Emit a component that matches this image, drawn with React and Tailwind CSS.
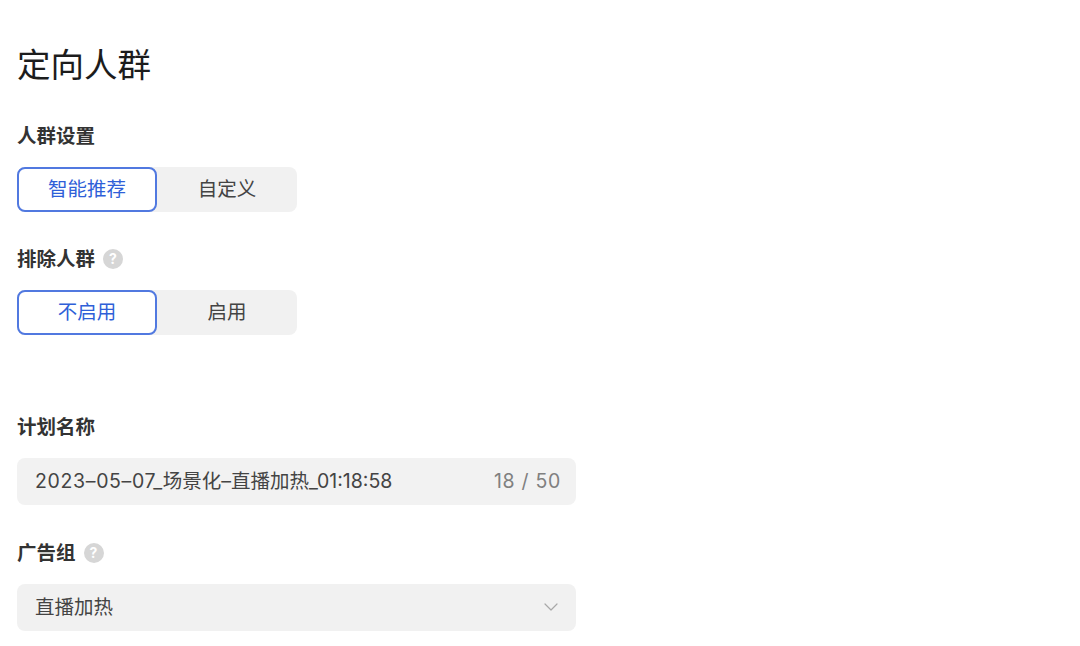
import React from 'react';
import { ChevronDown } from 'lucide-react';

const FONT = 'font-["Inter","Noto_Sans_CJK_SC",sans-serif]';

const HelpIcon = () => (
  <span className="ml-2 flex h-5 w-5 items-center justify-center rounded-full bg-[#d6d6d6] text-[14px] font-bold leading-none text-white">
    ?
  </span>
);

const Label = ({ text, help, className }) => (
  <div className={`flex h-[22px] items-center text-[19.5px] font-bold leading-[22px] text-[#333333] ${className}`}>
    {text}
    {help && <HelpIcon />}
  </div>
);

const Toggle = ({ active, other, className }) => (
  <div className={`flex h-[45px] w-[280px] rounded-lg bg-[#f1f1f1] text-[19.5px] ${className}`}>
    <div className="flex w-[140px] items-center justify-center rounded-lg border-2 border-[#5179e0] bg-white text-[#2f5fd8]">
      {active}
    </div>
    <div className="flex flex-1 items-center justify-center text-[#444444]">{other}</div>
  </div>
);

export default function App() {
  return (
    <div className={`h-[646px] w-[1080px] overflow-hidden bg-white pl-[17px] pt-[43px] ${FONT}`}>
      <h1 className="text-[33.5px] font-normal leading-[44px] text-[#1c1c1c]">定向人群</h1>
      <Label text="人群设置" className="mt-[38px]" />
      <Toggle active="智能推荐" other="自定义" className="mt-[20px]" />
      <Label text="排除人群" help className="mt-[36px]" />
      <Toggle active="不启用" other="启用" className="mt-[20px]" />
      <Label text="计划名称" className="mt-[81px]" />
      <div className="mt-[20px] flex h-[47px] w-[559px] items-center justify-between rounded-lg bg-[#f2f2f2] pl-[18px] pr-[15px] text-[19.5px] text-[#444444]">
        <span>
          <span className="tracking-[0.65px]">2023–05–07_</span>场景化–直播加热_01:18:58
        </span>
        <span className="tracking-[0.7px] text-[#808080]">18 / 50</span>
      </div>
      <Label text="广告组" help className="mt-[37px]" />
      <div className="mt-[20px] flex h-[47px] w-[559px] items-center justify-between rounded-lg bg-[#f1f1f1] pl-[18px] pr-[13px] text-[19.5px] text-[#444444]">
        <span>直播加热</span>
        <ChevronDown size={24} strokeWidth={1.2} className="-translate-y-px text-[#a8a8a8]" />
      </div>
    </div>
  );
}
